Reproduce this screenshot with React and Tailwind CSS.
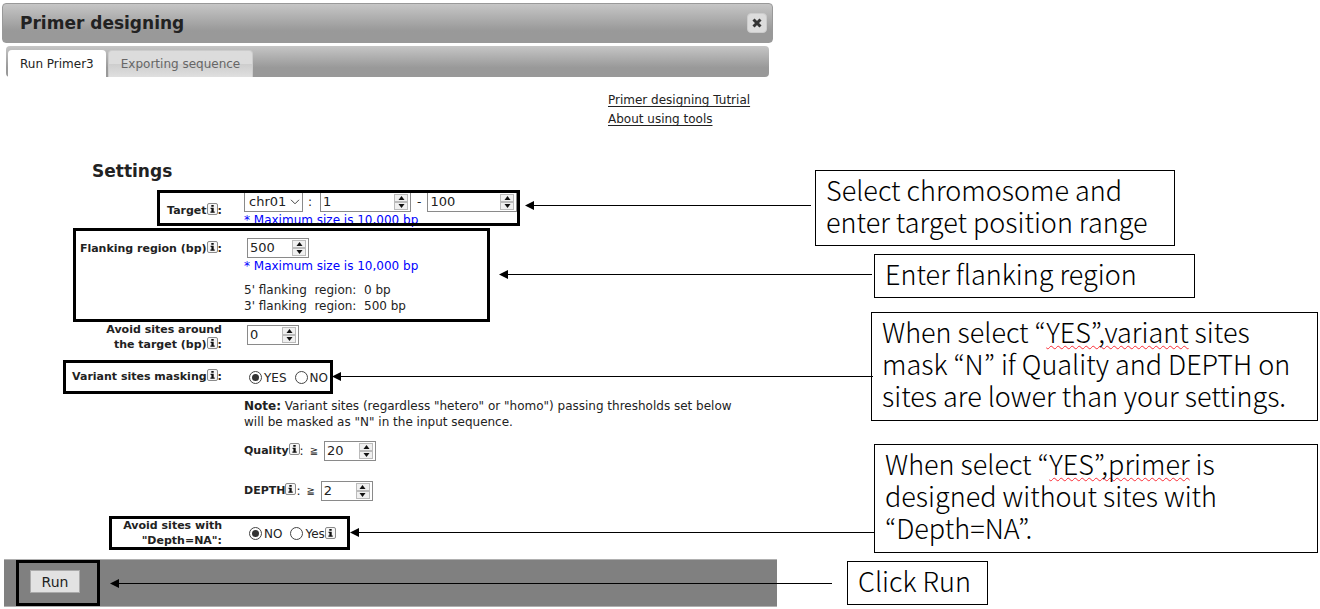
import React, { useState } from 'react';

const InfoIcon = () => (
  <svg className="inline-block w-[11px] h-3 -mt-1 shrink-0 align-[-1px]" viewBox="0 0 11 12" role="img" aria-label="info">
    <rect x="0.5" y="0.5" width="10" height="11" rx="1.5" fill="#f6f6f6" stroke="#8a8a8a" />
    <path d="M4.3 2h2.4v1.8H4.3zM3.6 4.7h3.1v3.9h1v1.2H3.4V8.6h1V5.9h-.8z" fill="#111" />
  </svg>
);

const Frame = ({ className }) => (
  <span className={`absolute inset-y-0 border-[3px] border-black pointer-events-none ${className}`} />
);

function NumberField({ id, label, initial, className }) {
  const [value, setValue] = useState(initial);

  return (
    <span className={`inline-flex h-5 items-stretch border border-[#8a8a8a] bg-white ${className}`}>
      <input
        id={id}
        type="number"
        aria-label={label}
        value={value}
        onChange={(e) => setValue(e.target.value)}
        className="min-w-0 flex-1 pl-0.5 outline-none text-[13px] leading-4 [appearance:textfield] [&::-webkit-inner-spin-button]:appearance-none"
      />
      <span className="flex w-3.5 flex-col justify-center mr-0.5">
        <button
          type="button"
          aria-label="Increase"
          onClick={() => setValue(Number(value) + 1)}
          className="flex h-2 items-center justify-center border border-[#bbb] bg-[#f0f0f0]"
        >
          <svg className="w-[7px] h-1" viewBox="0 0 7 4"><path d="M3.5 0L6.5 4h-6z" fill="#111" /></svg>
        </button>
        <button
          type="button"
          aria-label="Decrease"
          onClick={() => setValue(Number(value) - 1)}
          className="flex h-2 items-center justify-center border border-[#bbb] bg-[#f0f0f0]"
        >
          <svg className="w-[7px] h-1" viewBox="0 0 7 4"><path d="M3.5 4L6.5 0h-6z" fill="#111" /></svg>
        </button>
      </span>
    </span>
  );
}

const Radio = ({ name, label, checked }) => (
  <label className="inline-flex items-center gap-0.5">
    <input
      type="radio"
      name={name}
      defaultChecked={checked}
      className="appearance-none w-[13px] h-[13px] rounded-full border border-[#444] bg-white p-0.5 bg-clip-content checked:bg-[#333]"
    />
    <span className="pt-0.5">{label}</span>
  </label>
);

const Row = ({ label, htmlFor, className, labelClass, children }) => (
  <div className={`relative grid grid-cols-[222px_1fr] gap-x-[22px] ${className}`}>
    <label htmlFor={htmlFor} className={`text-right text-[11px] leading-[15px] font-bold whitespace-nowrap ${labelClass || ''}`}>{label}</label>
    <div>{children}</div>
  </div>
);

const Callout = ({ className, children }) => (
  <p className={`border border-black bg-white px-2.5 text-[27px] leading-8 font-light text-black whitespace-nowrap font-['Noto_Sans_CJK_JP',sans-serif] ${className}`}>
    {children}
  </p>
);

const Typo = ({ children }) => (
  <span className="underline decoration-wavy decoration-red-500 decoration-1 underline-offset-2 [text-decoration-skip-ink:none]">{children}</span>
);

const arrows = [
  { from: 811, to: 525, y: 205 },
  { from: 872, to: 499, y: 274 },
  { from: 873, to: 332, y: 376 },
  { from: 874, to: 350, y: 532 },
  { from: 832, to: 110, y: 583 },
];

export default function App() {
  return (
    <div className="relative flex items-start bg-white text-[#222] text-[12px] leading-4 font-['DejaVu_Sans',Verdana,sans-serif]">
      <main className="flex-1 min-w-0 pt-[3px]">
        <header className="ml-0.5 mr-1 flex h-10 items-center justify-between rounded border border-[#999] bg-linear-to-b from-[#c6c6c6] to-[#999] to-70% pl-[17px] pr-[5px]">
          <h1 className="text-[17px] leading-6 font-bold">Primer designing</h1>
          <button type="button" aria-label="Close" className="flex h-5 w-5 items-center justify-center rounded border border-[#ccc] bg-[#dcdcdc]">
            <svg className="w-2.5 h-2.5" viewBox="0 0 10 10"><path d="M1.5 1.5l7 7M8.5 1.5l-7 7" stroke="#333" strokeWidth="3" /></svg>
          </button>
        </header>

        <nav className="ml-1.5 mr-2 mt-[3px] flex h-[31px] items-end gap-0.5 rounded bg-linear-to-b from-[#c6c6c6] to-[#999] to-70% pl-0.5">
          <button type="button" className="h-[27px] rounded-t bg-white px-3 pt-px">Run Primer3</button>
          <button type="button" className="h-[27px] rounded-t border border-b-0 border-[#ccc] bg-linear-to-b from-[#dcdcdc] from-50% via-[#cdcdcd] via-50% to-[#e0e0e0] px-3 text-[#666]">Exporting sequence</button>
        </nav>

        <div className="mt-3.5 pl-[608px] leading-[19px] flex flex-col items-start whitespace-nowrap">
          <a href="#tutorial" className="underline underline-offset-2 [text-decoration-skip-ink:none]">Primer designing Tutrial</a>
          <a href="#about" className="underline underline-offset-2 [text-decoration-skip-ink:none]">About using tools</a>
        </div>

        <h2 className="mt-[30px] pl-[92px] text-[17px] leading-6 font-bold">Settings</h2>

        <form>
          <Row htmlFor="chr" className="mt-[7px] h-9 pt-0.5" labelClass="pt-[11px]" label={<>Target<InfoIcon />:</>}>
            <div className="flex items-center gap-1.5">
              <select id="chr" className="h-5 w-[59px] appearance-none border border-[#8a8a8a] bg-white pl-1 text-[13px] leading-4">
                <option>chr01</option>
              </select>
              <svg className="-ml-[19px] w-2.5 h-1.5 pointer-events-none" viewBox="0 0 10 6"><path d="M1 0.8l4 4 4-4" fill="none" stroke="#444" /></svg>
              <span className="mx-0.5">:</span>
              <NumberField label="Target start" initial="1" className="w-[91px]" />
              <span>-</span>
              <NumberField label="Target end" initial="100" className="w-[90px]" />
            </div>
            <p className="text-[#00f]">* Maximum size is 10,000 bp</p>
            <Frame className="left-[157px] w-[363px]" />
          </Row>

          <Row htmlFor="flank" className="mt-0.5 h-[94px] pt-[10px]" labelClass="pt-[3px]" label={<>Flanking region (bp)<InfoIcon />:</>}>
            <NumberField id="flank" label="Flanking region" initial="500" className="ml-[3px] w-[62px] align-top" />
            <p className="text-[#00f]">* Maximum size is 10,000 bp</p>
            <p className="mt-2 whitespace-pre">5' flanking  region:  0 bp</p>
            <p className="whitespace-pre">3' flanking  region:  500 bp</p>
            <Frame className="left-[73px] w-[417px]" />
          </Row>

          <Row htmlFor="around" className="h-[38px]" label={<>Avoid sites around<br />the target (bp)<InfoIcon />:</>}>
            <NumberField id="around" label="Avoid sites around the target" initial="0" className="ml-[3px] mt-[3px] w-[52px]" />
          </Row>

          <Row className="h-[34px] pt-2" labelClass="pt-px" label={<>Variant sites masking<InfoIcon />:</>}>
            <div className="flex gap-2 pl-[5px]">
              <Radio name="masking" label="YES" checked />
              <Radio name="masking" label="NO" />
            </div>
            <Frame className="left-[63px] w-[270px]" />
          </Row>

          <div className="pl-[244px] pt-1">
            <p className="whitespace-nowrap">
              <b>Note:</b> Variant sites (regardless "hetero" or "homo") passing thresholds set below<br />
              will be masked as "N" in the input sequence.
            </p>
            <div className="mt-[11px] flex items-center">
              <label htmlFor="quality" className="text-[11px] font-bold">Quality<InfoIcon /></label>
              <span>:</span>
              <span className="mx-1.5 text-[10px]">≧</span>
              <NumberField id="quality" label="Quality" initial="20" className="w-[52px]" />
            </div>
            <div className="mt-5 flex items-center">
              <label htmlFor="depth" className="text-[11px] font-bold">DEPTH<InfoIcon /></label>
              <span>:</span>
              <span className="mx-1.5 text-[10px]">≧</span>
              <NumberField id="depth" label="DEPTH" initial="2" className="w-[52px]" />
            </div>
          </div>

          <Row className="mt-[15px] h-[34px] pt-0.5" label={<>Avoid sites with<br />"Depth=NA":</>}>
            <div className="flex gap-2 pl-[5px] pt-1.5">
              <Radio name="depthna" label="NO" checked />
              <Radio name="depthna" label={<>Yes<InfoIcon /></>} />
            </div>
            <Frame className="left-[109px] w-[241px]" />
          </Row>
        </form>

        <footer className="relative ml-1 mt-[9px] h-12 border-y border-[#b0b0b0] bg-[#808080] pl-[26px] pt-2.5">
          <button type="button" className="h-[23px] w-[50px] border border-[#aaa] bg-[#e2e2e2] text-[14px] leading-5">Run</button>
          <Frame className="left-3 w-[84px]" />
        </footer>
      </main>

      <aside className="w-[543px] shrink-0 pt-[170px] pr-0.5">
        <Callout className="ml-[38px] mr-[143px] pt-[3px] pb-[7px]">
          Select chromosome and<br />enter target position range
        </Callout>
        <Callout className="ml-[97px] mr-[123px] mt-2 pt-[3px] pb-[7px]">Enter flanking region</Callout>
        <Callout className="ml-[94px] mt-3.5 pt-[3px] pb-2">
          When select “<Typo>YES”,variant</Typo> sites<br />mask “N” if Quality and DEPTH on<br />sites are lower than your settings.
        </Callout>
        <Callout className="ml-[97px] mt-[23px] pt-[3px] pb-2">
          When select “<Typo>YES”,primer</Typo> is<br />designed without sites with<br />“Depth=NA”.
        </Callout>
        <Callout className="ml-[70px] w-[141px] mt-2 pt-[3px] pb-[7px]">Click Run</Callout>
      </aside>

      <svg className="absolute inset-0 h-full w-full pointer-events-none" aria-hidden="true">
        {arrows.map((a) => (
          <g key={a.y}>
            <path d={`M${a.from} ${a.y + 0.5}H${a.to + 8}`} stroke="#000" />
            <path d={`M${a.to} ${a.y + 0.5}l9 -4.5v9z`} fill="#000" />
          </g>
        ))}
      </svg>
    </div>
  );
}
